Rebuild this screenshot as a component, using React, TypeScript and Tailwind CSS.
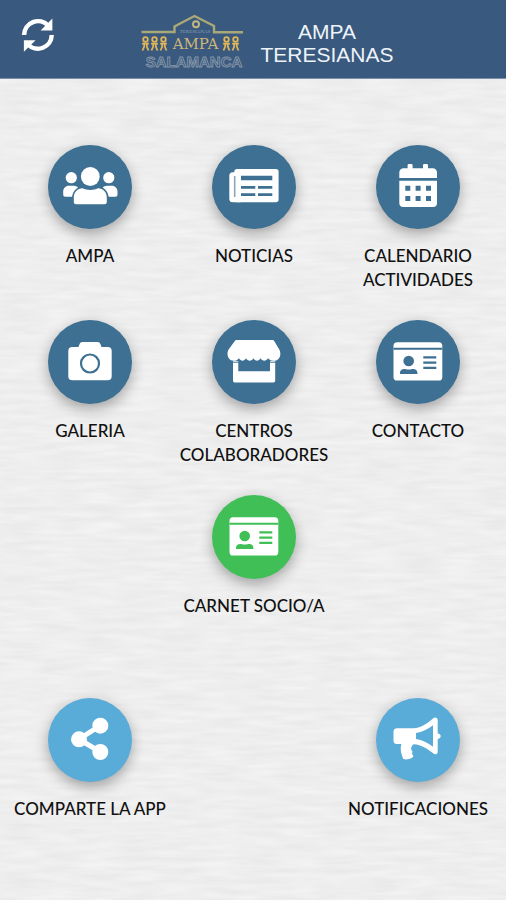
import type { ReactNode } from "react";

function RefreshIcon() {
  return (
    <svg viewBox="20 17 37 37" className="h-9 w-9" fill="none" aria-hidden="true">
      <path d="M24.2 35.5A14.2 14.2 0 0 1 49 26" stroke="#fff" strokeWidth="4.6" />
      <path d="M53.3 18.5V30.8H41.2Z" fill="#fff" />
      <path d="M52.6 35.5A14.2 14.2 0 0 1 28 45" stroke="#fff" strokeWidth="4.6" />
      <path d="M24 52.8V41H36Z" fill="#fff" />
    </svg>
  );
}

function Person({ x }: { x: number }) {
  return (
    <g stroke="#e0b559" fill="none" strokeWidth="1.8">
      <circle cx={x} cy="39.5" r="2.3" />
      <path d={`M${x - 3.4} 43.6H${x + 3.4}M${x - 1.3} 43V46.5L${x - 3} 50.5M${x + 1.3} 43V46.5L${x + 3} 50.5`} />
    </g>
  );
}

function Logo() {
  return (
    <svg viewBox="140 12 104 58" className="h-[58px] w-[104px]" role="img" aria-label="AMPA Teresianas Salamanca">
      <path d="M141.5 32H174.5V26.5L194.5 16L214 26V32.3H243" fill="none" stroke="#a9a878" strokeWidth="2.4" />
      <circle cx="196" cy="24.3" r="3" fill="none" stroke="#c2b781" strokeWidth="1.9" />
      <text x="195" y="33" textAnchor="middle" fontSize="5" fill="#8fa0b3" fontFamily="'Liberation Serif', serif">
        TERESIANAS
      </text>
      {[145.5, 154.5, 163.5, 226.5, 235.5].map((x) => (
        <Person key={x} x={x} />
      ))}
      <text x="195.5" y="49" textAnchor="middle" fontSize="15" fill="#cfb478" fontFamily="'DejaVu Serif', serif">
        AMPA
      </text>
      <text
        x="194"
        y="67"
        textAnchor="middle"
        fontSize="15"
        fontWeight="700"
        fill="#39597e"
        stroke="#8797a9"
        strokeWidth="0.9"
        fontFamily="'Liberation Sans', Arial, sans-serif"
      >
        SALAMANCA
      </text>
    </svg>
  );
}

const usersIcon = (
  <g fill="#fff">
    <circle cx="42.3" cy="31.5" r="9.4" />
    <circle cx="23.3" cy="32.7" r="5.6" />
    <circle cx="60.8" cy="32.7" r="5.6" />
    <path d="M34.5 43.3c2.5 1.2 5 1.7 7.8 1.7s5.3-.5 7.8-1.7c5 0 8.7 4 8.7 9v4.5a2.5 2.5 0 0 1-2.5 2.5h-28a2.5 2.5 0 0 1-2.5-2.5v-4.5c0-5 3.7-9 8.7-9z" />
    <path d="M20.8 40.7h5c1.7 0 3.2.7 4.2 1.8-3.2 1.9-5.3 5-6 9.2h-6.8a2 2 0 0 1-2-2v-3.4c0-3.1 2.5-5.6 5.6-5.6z" />
    <path d="M63.9 40.7h-5c-1.7 0-3.2.7-4.2 1.8 3.2 1.9 5.3 5 6 9.2h6.8a2 2 0 0 0 2-2v-3.4c0-3.1-2.5-5.6-5.6-5.6z" />
  </g>
);

const newsIcon = (
  <g>
    <rect x="17.3" y="27.3" width="14" height="30" rx="3.5" fill="#fff" />
    <rect x="22.3" y="24" width="44.3" height="33.3" rx="2.8" fill="#fff" />
    <path d="M22.7 31v21" stroke="#8da6b8" strokeWidth="1.6" />
    <path d="M29 30.7h31.3v4.6H29zM29 41h14.3v2.7H29zM46 41h14.3v2.7H46zM29 48.3h14.3V51H29zM46 48.3h14.3V51H46z" fill="currentColor" />
  </g>
);

const calendarIcon = (
  <g>
    <path d="M23.3 33v-5.5a4.2 4.2 0 0 1 4.2-4.2h4.1v-3a1.3 1.3 0 0 1 1.3-1.3h2.4a1.3 1.3 0 0 1 1.3 1.3v3H47v-3a1.3 1.3 0 0 1 1.3-1.3h2.4a1.3 1.3 0 0 1 1.3 1.3v3h4.8a4.2 4.2 0 0 1 4.2 4.2V33z" fill="#fff" />
    <path d="M23.3 35.7H61v22.3a4 4 0 0 1-4 4H27.3a4 4 0 0 1-4-4z" fill="#fff" />
    <path d="M29.3 40.7h5v5h-5zM39.6 40.7h5v5h-5zM50 40.7h5v5h-5zM29.3 51h5v5h-5zM39.6 51h5v5h-5zM50 51h5v5h-5z" fill="currentColor" />
  </g>
);

const cameraIcon = (
  <g>
    <path d="M24.3 27h6.2l1.2-3.2A2.8 2.8 0 0 1 34.3 22h15.4a2.8 2.8 0 0 1 2.6 1.8l1.2 3.2h6.2a4 4 0 0 1 4 4v25.3a4 4 0 0 1-4 4H24.3a4 4 0 0 1-4-4V31a4 4 0 0 1 4-4z" fill="#fff" />
    <circle cx="42" cy="43.5" r="9" fill="none" stroke="currentColor" strokeWidth="2.2" />
  </g>
);

const storeIcon = (
  <g>
    <path d="M24.5 20h36a2 2 0 0 1 1.7 1l5.1 8.5c2.5 4.5.5 11.3-5.3 11.3-2.6 0-4.7-1-6-2.6-1.5 3.3-6 3.3-7.5 0-1.5 3.3-5.6 3.3-7 0-1.5 3.3-6 3.3-7.5 0-1.5 3.3-5.5 3.3-7 0-1.3 1.6-2.7 2.6-5.3 2.6-5.8 0-7.6-6.8-5.1-11.3L22.8 21a2 2 0 0 1 1.7-1z" fill="#fff" />
    <path d="M21 41h5.3v10.2H58V41h5.2v19.8a1.7 1.7 0 0 1-1.7 1.7H22.7a1.7 1.7 0 0 1-1.7-1.7z" fill="#fff" />
    <path d="M20 42.2h7M57.500 42.2h7" stroke="currentColor" strokeWidth="1" />
  </g>
);

const cardIcon = (
  <g>
    <rect x="17.5" y="22.3" width="48.8" height="38.2" rx="3.6" fill="#fff" />
    <path d="M17.5 27.7h48.8v2H17.5zM47.3 36.2h13v2.4h-13zM47.3 41.4h13v2.4h-13zM47.3 46.7h13v2.4h-13zM24 54v-1.2c0-2.4 1.7-3.9 4.2-3.9h1c2.2.9 4.8.9 7 0h1c2.5 0 4.2 1.5 4.2 3.9V54z" fill="currentColor" />
    <circle cx="32.7" cy="41" r="5.3" fill="currentColor" />
  </g>
);

const shareIcon = (
  <g fill="#fff">
    <path d="M52.3 27.5L31 41.2L52.3 54" fill="none" stroke="#fff" strokeWidth="5" />
    <circle cx="52.3" cy="27.7" r="8" />
    <circle cx="31" cy="41.3" r="8" />
    <circle cx="52.3" cy="54" r="8" />
  </g>
);

const megaphoneIcon = (
  <g fill="#fff">
    <path d="M21 30.3h16.5c7.5 0 15-5.7 20-10.2 1.6-1.4 4.2-.6 4.2 1.9v13.6c4 .4 4 5 0 5.4v12.7c0 2.5-2.4 3.3-4.2 1.9-5.2-4.2-12-8.9-20-9.3-3 2.7-2.8 5.2-1 7.3-.8 1.8-.4 3 1 4.5-1 2.6-6.3 4.2-10.2 2.9-1.8-4.8-3.6-9.5-1.9-15H21a3.5 3.5 0 0 1-3.5-3.5v-8.7a3.5 3.5 0 0 1 3.5-3.5z" />
    <path d="M40 35c6.2-.8 11.8-3.7 17-7.7v21.5c-5.2-4-10.8-6.9-17-7.7z" fill="currentColor" />
  </g>
);

type TileProps = { label: string; icon: ReactNode; color: string; className?: string };

function Tile({ label, icon, color, className = "" }: TileProps) {
  return (
    <button type="button" className={`flex flex-col items-center gap-[15px] ${className}`}>
      <span className={`h-[84px] w-[84px] rounded-full shadow-[0_5px_14px_rgba(0,0,0,0.32)] ${color}`}>
        <svg viewBox="0 0 84 84" className="h-full w-full" aria-hidden="true">
          {icon}
        </svg>
      </span>
      <span className="max-w-[156px] text-[17px] leading-6 font-medium text-[#111]">{label}</span>
    </button>
  );
}

const blue = "bg-[#3d7092] text-[#3d7092]";
const green = "bg-[#40bf57] text-[#40bf57]";
const sky = "bg-[#59abd8] text-[#59abd8]";

function PaperTexture() {
  return (
    <svg className="absolute inset-0 h-full w-full" aria-hidden="true">
      <filter id="paper" x="0" y="0" width="100%" height="100%" colorInterpolationFilters="sRGB">
        <feTurbulence type="fractalNoise" baseFrequency="0.025 0.18" numOctaves="2" seed="4" />
        <feColorMatrix values="0.06 0 0 0 0.903  0.06 0 0 0 0.903  0.06 0 0 0 0.903  0 0 0 0 1" />
      </filter>
      <rect width="100%" height="100%" filter="url(#paper)" />
    </svg>
  );
}

export default function App() {
  return (
    <div className="flex min-h-screen flex-col bg-[#eeeeee] font-[Lato,sans-serif]">
      <header className="flex h-[79px] items-start border-b border-[#7890a8] bg-[#39597e] pr-7 pl-5">
        <button type="button" aria-label="Actualizar" className="mt-[17px]">
          <RefreshIcon />
        </button>
        <div className="flex flex-1 items-start justify-center gap-4 pt-3">
          <Logo />
          <h1 className="pt-2 text-center font-['Liberation_Sans',Arial,sans-serif] text-[21px] leading-[23px] text-[#edf3f9]">
            AMPA
            <br />
            TERESIANAS
          </h1>
        </div>
      </header>
      <main className="relative flex-1">
        <PaperTexture />
        <div className="relative pt-[66px] pr-1.5 pb-10 pl-2">
          <nav aria-label="Secciones" className="grid grid-cols-3 items-start gap-y-7">
            <Tile label="AMPA" icon={usersIcon} color={blue} />
            <Tile label="NOTICIAS" icon={newsIcon} color={blue} />
            <Tile label="CALENDARIO ACTIVIDADES" icon={calendarIcon} color={blue} />
            <Tile label="GALERIA" icon={cameraIcon} color={blue} />
            <Tile label="CENTROS COLABORADORES" icon={storeIcon} color={blue} />
            <Tile label="CONTACTO" icon={cardIcon} color={blue} />
            <Tile label="CARNET SOCIO/A" icon={cardIcon} color={green} className="col-start-2" />
          </nav>
          <div className="mt-20 grid grid-cols-3 items-start">
            <Tile label="COMPARTE LA APP" icon={shareIcon} color={sky} />
            <Tile label="NOTIFICACIONES" icon={megaphoneIcon} color={sky} className="col-start-3" />
          </div>
        </div>
      </main>
    </div>
  );
}
